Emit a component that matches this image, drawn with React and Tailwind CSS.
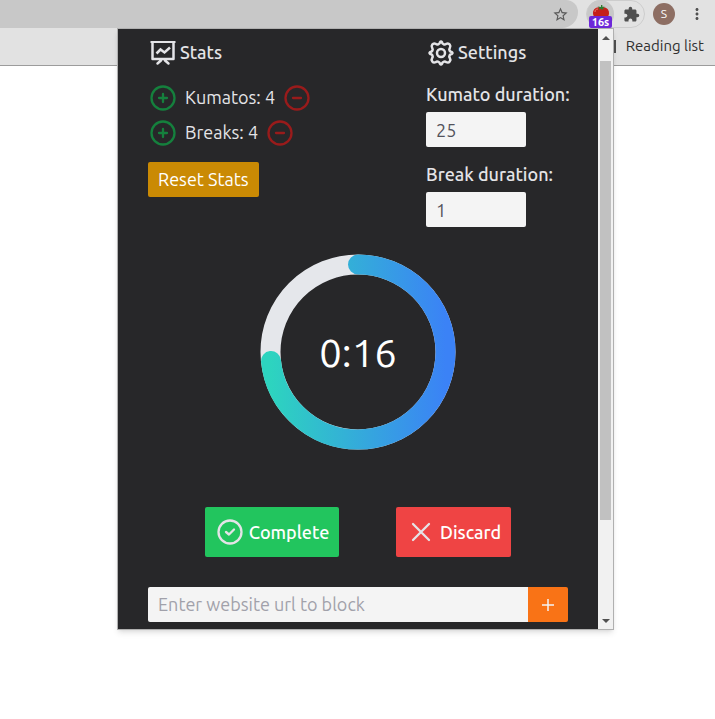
import React from 'react';
import { MdStarBorder, MdExtension, MdMoreVert } from 'react-icons/md';

function Icon({ children, className = '', width = 2 }) {
  return (
    <svg
      viewBox="0 0 30 30"
      className={`h-[30px] w-[30px] shrink-0 ${className}`}
      fill="none"
      stroke="currentColor"
      strokeWidth={width}
      strokeLinecap="round"
      strokeLinejoin="round"
      aria-hidden="true"
    >
      {children}
    </svg>
  );
}

function BoardIcon() {
  return (
    <Icon>
      <path strokeWidth="2" strokeLinecap="butt" d="M2.500 4h25" />
      <path strokeWidth="2.500" d="M4.500 5v16h21V5M13 22.500l-3.500 3M17 22.500l3.500 3" />
      <path strokeWidth="2.500" strokeLinecap="butt" strokeLinejoin="miter" d="M8.500 15.500l4-4 4 3 5.500-5" />
    </Icon>
  );
}

function GearIcon() {
  return (
    <Icon>
      <circle cx="15" cy="15" r="4" strokeWidth="2.500" />
      <path
        strokeWidth="2.500"
        d="M12.500 6.200Q14 5.500 14 4.200Q15 2.800 16 4.200Q16 5.500 17.500 6.200Q19 7 20.200 5.900Q22.500 5 23.700 6.600Q25 8.300 23.800 10Q22.900 11.300 23.600 12.700Q24.300 14 25.800 14Q27.200 15 25.800 16Q24.300 16 23.600 17.300Q22.900 18.700 23.800 20Q25 21.700 23.700 23.400Q22.500 25 20.200 24.100Q19 23 17.500 23.800Q16 24.500 16 25.800Q15 27.200 14 25.800Q14 24.500 12.500 23.800Q11 23 9.800 24.100Q7.500 25 6.300 23.400Q5 21.700 6.200 20Q7.100 18.700 6.400 17.300Q5.700 16 4.200 16Q2.800 15 4.200 14Q5.700 14 6.400 12.700Q7.100 11.300 6.200 10Q5 8.300 6.300 6.600Q7.500 5 9.800 5.900Q11 7 12.500 6.200Z"
      />
    </Icon>
  );
}

function PlusCircle() {
  return (
    <Icon width={2.3}>
      <circle cx="15" cy="15" r="11.500" />
      <path d="M15 11v8M11 15h8" />
    </Icon>
  );
}

function MinusCircle() {
  return (
    <Icon width={2.3}>
      <circle cx="15" cy="15" r="11.500" />
      <path d="M11 15h8" />
    </Icon>
  );
}

function Tomato() {
  return (
    <svg viewBox="0 0 18 16" className="h-4 w-[18px] shrink-0" aria-hidden="true">
      <path d="M1 9c0-4 3-6 8-6s8 2 8 6-3 7-8 7-8-3-8-7z" fill="#c51f1a" />
      <path d="M3 8c0-2 1-3 3-3" stroke="#ee7a68" fill="none" />
      <path d="M9 3L5.500 2.500l2 1.500-1.500 1.500L9 5l2.500 1-.5-2 2.500-1-3.500-.500.500-1.500H9z" fill="#2e7b2e" />
    </svg>
  );
}

function Toolbar() {
  return (
    <header className="border-b border-[#9c9c9c] bg-[#e2e2e2]">
      <div className="flex h-7 items-center">
        <div className="flex h-7 flex-1 items-center justify-end rounded-br-2xl rounded-tr-xl bg-[#c8c8c8] pr-[9px]">
          <button aria-label="Bookmark this page" className="text-[#5a5a5a]">
            <MdStarBorder size={17} />
          </button>
        </div>
        <div className="ml-2 flex h-7 items-center rounded-full border border-[#cdcdcd]">
          <button
            aria-label="Kumato, 16 seconds left"
            className="flex h-7 w-[27px] flex-col items-center rounded-full bg-[#c8c8c8] pt-1"
          >
            <Tomato />
            <span className="relative -mt-1 rounded-xs bg-[#6d28d9] px-[3px] text-[11px] font-bold leading-3 text-white">
              16s
            </span>
          </button>
          <button aria-label="Extensions" className="flex w-[30px] justify-center pl-1 text-[#505050]">
            <MdExtension size={17} />
          </button>
        </div>
        <button
          aria-label="Profile"
          className="ml-2 h-[22px] w-[22px] rounded-full bg-[#8d6e63] text-xs text-white"
        >
          S
        </button>
        <button aria-label="Menu" className="ml-[13px] mr-[9px] text-[#505050]">
          <MdMoreVert size={18} />
        </button>
      </div>
      <div className="flex h-[37px] items-center justify-end pr-[11px]">
        <a href="#reading-list" className="flex items-center gap-[10px] text-[15px] text-[#303030]">
          <span className="h-[13px] w-3 border-2 border-[#505050]" />
          Reading list
        </a>
      </div>
    </header>
  );
}

function Counter({ label, value }) {
  return (
    <div className="flex h-[35px] items-center">
      <button aria-label={`Add to ${label}`} className="text-[#15803d]">
        <PlusCircle />
      </button>
      <span className="mx-[7px]">
        {label}: {value}
      </span>
      <button aria-label={`Remove from ${label}`} className="text-[#991b1b]">
        <MinusCircle />
      </button>
    </div>
  );
}

function Duration({ id, label, value }) {
  return (
    <div className="flex flex-col items-start">
      <label htmlFor={id} className="h-[35px] whitespace-nowrap font-medium leading-[35px]">
        {label}
      </label>
      <input
        id={id}
        defaultValue={value}
        className="h-[35px] w-[100px] rounded-xs bg-[#f4f4f4] px-2.5 text-[#52525b] outline-none"
      />
    </div>
  );
}

function Timer({ elapsed, total }) {
  const length = 2 * Math.PI * 88;
  return (
    <div className="mt-[25px] grid place-items-center">
      <svg viewBox="0 0 200 200" className="col-start-1 row-start-1 h-[200px] w-[200px]" aria-hidden="true">
        <defs>
          <linearGradient id="ring" gradientUnits="userSpaceOnUse" x1="12" y1="0" x2="188" y2="0">
            <stop offset="0" stopColor="#2dd4bf" />
            <stop offset="1" stopColor="#3b82f6" />
          </linearGradient>
        </defs>
        <circle cx="100" cy="100" r="87.500" fill="none" stroke="#e5e7eb" strokeWidth="20" />
        <path
          d="M100 12.500a87.500 87.500 0 0 1 0 175a87.500 87.500 0 0 1 0 -175"
          pathLength={length}
          fill="none"
          stroke="url(#ring)"
          strokeWidth="20"
          strokeLinecap="round"
          strokeDasharray={`${(length * elapsed) / total} ${length}`}
        />
      </svg>
      <span className="col-start-1 row-start-1 mt-0.5 text-[40px] leading-none text-white">0:16</span>
    </div>
  );
}

function Popup() {
  return (
    <main className="absolute right-[101px] top-7 flex w-[497px] max-w-full border border-[#b0b0b0] bg-[#27272a] text-[18px] text-[#e4e4e7] shadow-md">
      <div className="h-[600px] flex-1 overflow-hidden bg-[#272729] px-[30px] pt-1.5">
        <div className="flex justify-between">
          <section className="flex flex-col items-start">
            <h2 className="mb-2.5 flex h-[35px] items-center gap-0.5 font-medium">
              <BoardIcon />
              Stats
            </h2>
            <Counter label="Kumatos" value={4} />
            <Counter label="Breaks" value={4} />
            <button className="mt-3 h-[35px] rounded-xs bg-[#ca8a04] px-2.5 text-white">Reset Stats</button>
          </section>
          <section className="flex w-[142px] flex-col">
            <h2 className="mb-[7px] flex h-[35px] items-center gap-0.5 font-medium">
              <GearIcon />
              Settings
            </h2>
            <div className="flex flex-col gap-[10px]">
              <Duration id="kumato" label="Kumato duration:" value="25" />
              <Duration id="break" label="Break duration:" value="1" />
            </div>
          </section>
        </div>

        <Timer elapsed={44} total={60} />

        <div className="mt-[55px] flex justify-evenly">
          <button className="flex h-[50px] items-center gap-1 rounded-xs bg-[#22c55e] px-2.5 font-medium text-white">
            <Icon className="text-[#e4e4e7]" width={2.3}>
              <circle cx="15" cy="15" r="11.500" />
              <path d="M11 15l3 2.500 5-5" />
            </Icon>
            Complete
          </button>
          <button className="flex h-[50px] items-center gap-1 rounded-xs bg-[#ef4444] px-2.5 font-medium text-white">
            <Icon className="text-[#e4e4e7]" width={2.3}>
              <path d="M7 7l16 16M23 7L7 23" />
            </Icon>
            Discard
          </button>
        </div>

        <form className="mt-[30px] flex h-[35px]">
          <input
            aria-label="Website url to block"
            placeholder="Enter website url to block"
            className="min-w-0 flex-1 rounded-l-xs bg-[#f4f4f4] px-2.5 text-[#52525b] outline-none placeholder:text-[#a1a1aa]"
          />
          <button
            type="button"
            aria-label="Block website"
            className="flex w-10 items-center justify-center rounded-r-xs bg-[#f97316] text-[#f4f4f5]"
          >
            <svg viewBox="0 0 12 12" className="h-3 w-3" stroke="currentColor" strokeWidth="1.500" aria-hidden="true">
              <path d="M6 0v12M0 6h12" />
            </svg>
          </button>
        </form>
      </div>
      <div className="flex w-[15px] flex-col items-center bg-[#f1f1f1]" aria-hidden="true">
        <svg viewBox="0 0 8 4" className="my-[7px] h-1 w-2 fill-[#505050]">
          <path d="M0 4l4-4 4 4z" />
        </svg>
        <div className="mt-[14px] h-[459px] w-[11px] bg-[#c1c1c1]" />
        <svg viewBox="0 0 8 4" className="mb-[6px] mt-auto h-1 w-2 fill-[#505050]">
          <path d="M0 0l4 4 4-4z" />
        </svg>
      </div>
    </main>
  );
}

export default function App() {
  return (
    <div className="relative min-h-screen bg-white font-['Ubuntu','Noto_Sans',sans-serif]">
      <Toolbar />
      <Popup />
    </div>
  );
}
